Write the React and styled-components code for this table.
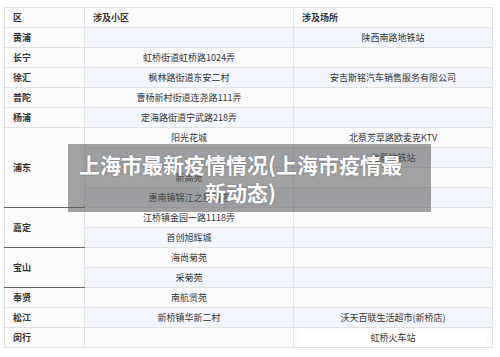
import styled, { createGlobalStyle } from 'styled-components';

const GlobalStyle = createGlobalStyle`
  body {
    margin: 0;
    background: #ffffff;
    font-family: "Noto Sans CJK SC", "Noto Sans", sans-serif;
  }
`;

const districts = [
  { name: '黄浦', items: [['', '陕西南路地铁站']] },
  { name: '长宁', items: [['虹桥街道虹桥路1024弄', '']] },
  { name: '徐汇', items: [['枫林路街道东安二村', '安吉斯铭汽车销售服务有限公司']] },
  { name: '普陀', items: [['曹杨新村街道连尧路111弄', '']] },
  { name: '杨浦', items: [['定海路街道宁武路218弄', '']] },
  {
    name: '浦东',
    items: [
      ['阳光花城', '北蔡芳草路欧麦克KTV'],
      ['', '北蔡地铁站'],
      ['新高苑', ''],
      ['惠南镇锦江之星酒店', ''],
    ],
  },
  { name: '嘉定', items: [['江桥镇金园一路1118弄', ''], ['首创旭辉城', '']] },
  { name: '宝山', items: [['海尚菊苑', ''], ['采菊苑', '']] },
  { name: '奉贤', items: [['南航贤苑', '']] },
  { name: '松江', items: [['新桥镇华新二村', '沃天百联生活超市(新桥店)']] },
  { name: '闵行', items: [['', '虹桥火车站']] },
];

const App = () => {
  let rowIndex = 0;

  return (
    <Page>
      <GlobalStyle />
      <Table>
        <colgroup>
          <col style={{ width: 80 }} />
          <col style={{ width: 209 }} />
          <col style={{ width: 199 }} />
        </colgroup>
        <thead>
          <Row>
            <HeadCell>区</HeadCell>
            <HeadCell>涉及小区</HeadCell>
            <HeadCell>涉及场所</HeadCell>
          </Row>
        </thead>
        <tbody>
          {districts.map((d) =>
            d.items.map(([area, place], i) => {
              rowIndex += 1;
              const striped = rowIndex % 2 === 1;
              return (
                <Row key={d.name + i} $striped={striped}>
                  {i === 0 && (
                    <DistrictCell rowSpan={d.items.length} $dark={d.items.length > 1}>
                      {d.name}
                    </DistrictCell>
                  )}
                  <Cell>{area}</Cell>
                  <Cell>
                    {d.name === '闵行' ? <Highlight>{place}</Highlight> : place}
                  </Cell>
                </Row>
              );
            })
          )}
        </tbody>
      </Table>
      <Banner>上海市最新疫情情况(上海市疫情最新动态)</Banner>
    </Page>
  );
};

const Page = styled.div`
  position: relative;
  padding: 7px 8px 0 4px;
`;

const Table = styled.table`
  width: 488px;
  border-collapse: collapse;
  table-layout: fixed;
  border: 1px solid #e2e2e2;
  font-size: 9px;
  color: #333;
`;

const Row = styled.tr`
  height: 20px;
  background: ${(p) => (p.$striped ? '#f3f6fd' : '#fcfcfc')};
`;

const HeadCell = styled.th`
  padding: 0 8px;
  text-align: left;
  font-weight: 700;
  border: 1px solid #e2e2e2;
  background: #fcfcfc;
`;

const DistrictCell = styled.td`
  padding: 0 8px;
  font-weight: 700;
  text-align: left;
  vertical-align: middle;
  background: #fcfcfc;
  border: 1px solid #e2e2e2;
  border-bottom: 1px solid ${(p) => (p.$dark ? '#666' : '#e2e2e2')};
`;

const Cell = styled.td`
  padding: 0 6px;
  text-align: center;
  border: 1px solid #e2e2e2;
  white-space: nowrap;
`;

const Highlight = styled.span`
  display: block;
  background: #ffffff;
  line-height: 14px;
`;

const Banner = styled.div`
  position: absolute;
  left: 68px;
  top: 144px;
  width: 363px;
  box-sizing: border-box;
  padding: 6px 20px 6px 2px;
  background: rgba(85, 85, 85, 0.55);
  color: #ffffff;
  font-size: 21px;
  font-weight: 700;
  line-height: 28px;
  text-align: center;
  text-shadow: 0 0 2px rgba(0, 0, 0, 0.3);
`;

export default App;
